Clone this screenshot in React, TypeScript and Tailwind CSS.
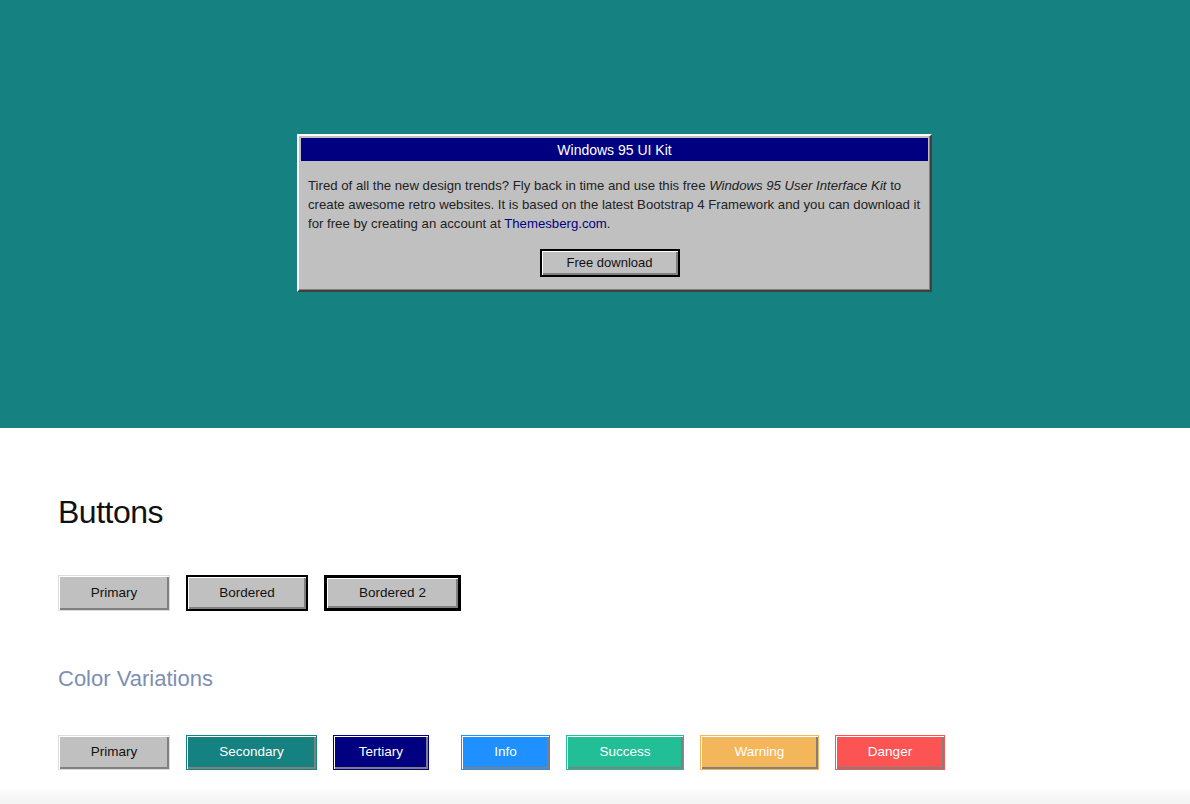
import React from 'react';

type Variant = {
  label: string;
  className: string;
};

// 3D bevel helpers, Win95 style
const bevelRaised =
  'shadow-[inset_1px_1px_0_#ffffff,inset_-2px_-2px_0_#808080]';

const colorVariants: Variant[] = [
  { label: 'Primary', className: 'w-[112px] bg-[#c0c0c0] text-[#111] border-[#dcdcdc]' },
  { label: 'Secondary', className: 'w-[131px] bg-[#158181] text-white border-[#158181]' },
  { label: 'Tertiary', className: 'w-[96px] bg-[#000080] text-white border-[#000080]' },
  { label: 'Info', className: 'w-[89px] ml-[16px] bg-[#1e90ff] text-white border-[#1e90ff]' },
  { label: 'Success', className: 'w-[118px] bg-[#22bf97] text-white border-[#22bf97]' },
  { label: 'Warning', className: 'w-[119px] bg-[#f4b65a] text-white border-[#f4b65a]' },
  { label: 'Danger', className: 'w-[110px] bg-[#fc5353] text-white border-[#fc5353]' },
];

const WindowDialog: React.FC = () => (
  <div className="w-[635px] bg-[#c0c0c0] border-2 border-t-white border-l-white border-r-[#404040] border-b-[#404040] p-[2px] shadow-[inset_-1px_-1px_0_#808080]">
    <div className="h-[23px] bg-[#000080] flex items-center justify-center text-white text-[14px] leading-none">
      Windows 95 UI Kit
    </div>
    <div className="px-[7px] pt-[15px] pb-[11px]">
      <p className="text-[13.2px] leading-[19px] text-[#222]">
        Tired of all the new design trends? Fly back in time and use this free{' '}
        <em>Windows 95 User Interface Kit</em> to
        <br />
        create awesome retro websites. It is based on the latest Bootstrap 4 Framework and you can download it
        <br />
        for free by creating an account at{' '}
        <a href="#" className="text-[#000080]">Themesberg.com</a>.
      </p>
      <div className="flex justify-center pr-[10px] mt-[16px]">
        <button
          className={`w-[140px] h-[28px] bg-[#c0c0c0] border-2 border-black text-[13px] text-[#111] ${bevelRaised}`}
        >
          Free download
        </button>
      </div>
    </div>
  </div>
);

export default function App() {
  return (
    <div className="min-h-[804px] bg-white" style={{ fontFamily: '"Liberation Sans", Arial, sans-serif' }}>
      {/* Hero */}
      <section className="h-[428px] bg-[#158181] pt-[134px] pl-[297px]">
        <WindowDialog />
      </section>

      {/* Buttons */}
      <section className="px-[58px] pt-[68px]">
        <h2 className="text-[32px] leading-none text-[#111] tracking-[-0.5px]">Buttons</h2>

        <div className="flex gap-[16px] mt-[47px]">
          <button
            className={`w-[112px] h-[36px] bg-[#c0c0c0] border border-[#dcdcdc] text-[13.5px] text-[#111] ${bevelRaised}`}
          >
            Primary
          </button>
          <button
            className={`w-[122px] h-[36px] bg-[#c0c0c0] border-2 border-black text-[13.5px] text-[#111] ${bevelRaised}`}
          >
            Bordered
          </button>
          <button
            className={`w-[137px] h-[36px] bg-[#c0c0c0] border-[3px] border-black text-[13.5px] text-[#111] ${bevelRaised}`}
          >
            Bordered 2
          </button>
        </div>

        <h3 className="mt-[57px] text-[22px] leading-none text-[#7d8fb3]">Color Variations</h3>

        <div className="flex gap-[16px] mt-[45px]">
          {colorVariants.map((v) => (
            <button
              key={v.label}
              className={`h-[35px] border text-[13.5px] ${bevelRaised} ${v.className}`}
            >
              {v.label}
            </button>
          ))}
        </div>
      </section>

      <div className="mt-[16px] h-[20px] bg-gradient-to-b from-white to-[#f1f1f1]" />
    </div>
  );
}
